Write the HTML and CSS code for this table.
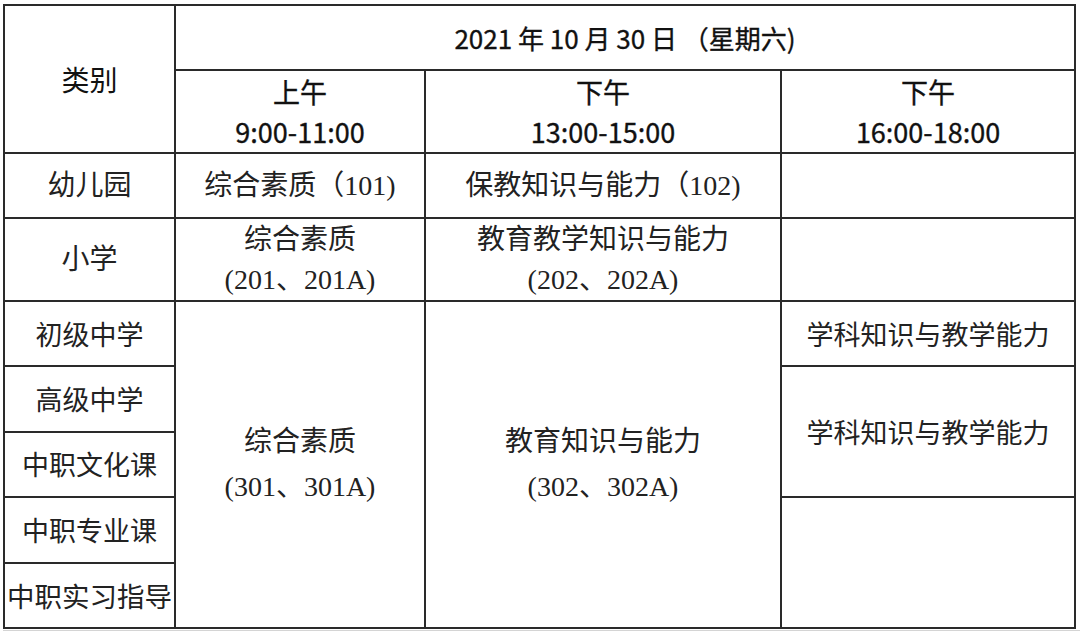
FILE: index.html
```html
<!DOCTYPE html>
<html lang="zh-CN">
<head>
<meta charset="utf-8">
<title>考试安排</title>
<link rel="stylesheet" href="styles.css">
</head>
<body>
<table class="schedule">
  <colgroup>
    <col class="c1">
    <col class="c2">
    <col class="c3">
    <col class="c4">
  </colgroup>
  <tr class="r-date">
    <th rowspan="2" class="head cat">类别</th>
    <th colspan="3" class="head date">2021 年 10 月 30 日 （星期六)</th>
  </tr>
  <tr class="r-time">
    <th class="head time"><span class="ln">上午</span><span class="ln">9:00-11:00</span></th>
    <th class="head time"><span class="ln">下午</span><span class="ln">13:00-15:00</span></th>
    <th class="head time"><span class="ln">下午</span><span class="ln">16:00-18:00</span></th>
  </tr>
  <tr class="r-short">
    <td class="serif">幼儿园</td>
    <td class="serif shift">综合素质（101)</td>
    <td class="serif shift">保教知识与能力（102)</td>
    <td></td>
  </tr>
  <tr class="r-tall">
    <td class="serif">小学</td>
    <td class="serif"><span class="ln">综合素质</span><span class="ln">(201、201A)</span></td>
    <td class="serif"><span class="ln">教育教学知识与能力</span><span class="ln">(202、202A)</span></td>
    <td></td>
  </tr>
  <tr class="r-row">
    <td class="sans">初级中学</td>
    <td rowspan="5" class="serif big"><span class="ln">综合素质</span><span class="ln">(301、301A)</span></td>
    <td rowspan="5" class="serif big"><span class="ln">教育知识与能力</span><span class="ln">(302、302A)</span></td>
    <td class="sans">学科知识与教学能力</td>
  </tr>
  <tr class="r-row">
    <td class="sans">高级中学</td>
    <td rowspan="2" class="sans">学科知识与教学能力</td>
  </tr>
  <tr class="r-row">
    <td class="sans">中职文化课</td>
  </tr>
  <tr class="r-row">
    <td class="sans">中职专业课</td>
    <td rowspan="2"></td>
  </tr>
  <tr class="r-row">
    <td class="sans wide">中职实习指导</td>
  </tr>
</table>
<div class="tail"></div>
</body>
</html>
```

FILE: styles.css
```css
html, body {
  margin: 0;
  padding: 0;
  background: #ffffff;
}

body {
  padding: 4px 0 0 3px;
  font-family: "Noto Sans CJK SC", sans-serif;
  color: #151515;
}

.schedule {
  border-collapse: collapse;
  width: 1071px;
  table-layout: fixed;
  border: 2px solid #2a2a2a;
}

.c1 { width: 171px; }
.c2 { width: 250px; }
.c3 { width: 356px; }
.c4 { width: 294px; }

.schedule th,
.schedule td {
  border: 2px solid #2a2a2a;
  padding: 0;
  text-align: center;
  vertical-align: middle;
  font-weight: normal;
  white-space: nowrap;
  overflow: hidden;
}

.r-date { height: 65px; }
.r-time { height: 83px; }
.r-short { height: 65px; }
.r-tall { height: 83px; }
.r-row { height: 65.4px; }

.ln {
  display: block;
}

.head {
  font-family: "Noto Sans CJK SC", sans-serif;
  font-weight: 500;
  color: #111;
  -webkit-text-stroke: 0.35px #111;
}

.cat {
  font-size: 28px;
  font-weight: 700;
  -webkit-text-stroke: 0;
  padding-bottom: 4px;
}

.date {
  font-size: 26px;
  padding-top: 2px;
  padding-right: 14px;
}

.time {
  font-size: 27px;
  line-height: 40px;
  padding-top: 2px;
}

.serif {
  font-family: "Liberation Serif", "Noto Sans CJK SC", serif;
  font-size: 28px;
  line-height: 40px;
  color: #222;
}

.shift {
  padding-right: 12px;
}

.sans {
  font-family: "Noto Sans CJK SC", sans-serif;
  font-size: 27px;
  line-height: 40px;
  color: #222;
}

.wide {
  font-size: 27.5px;
}

.big {
  line-height: 45px;
  padding-top: 8px;
}

.tail {
  width: 1077px;
  height: 0;
  margin-top: 1px;
  border-top: 1px solid #d4d4d4;
}
```
